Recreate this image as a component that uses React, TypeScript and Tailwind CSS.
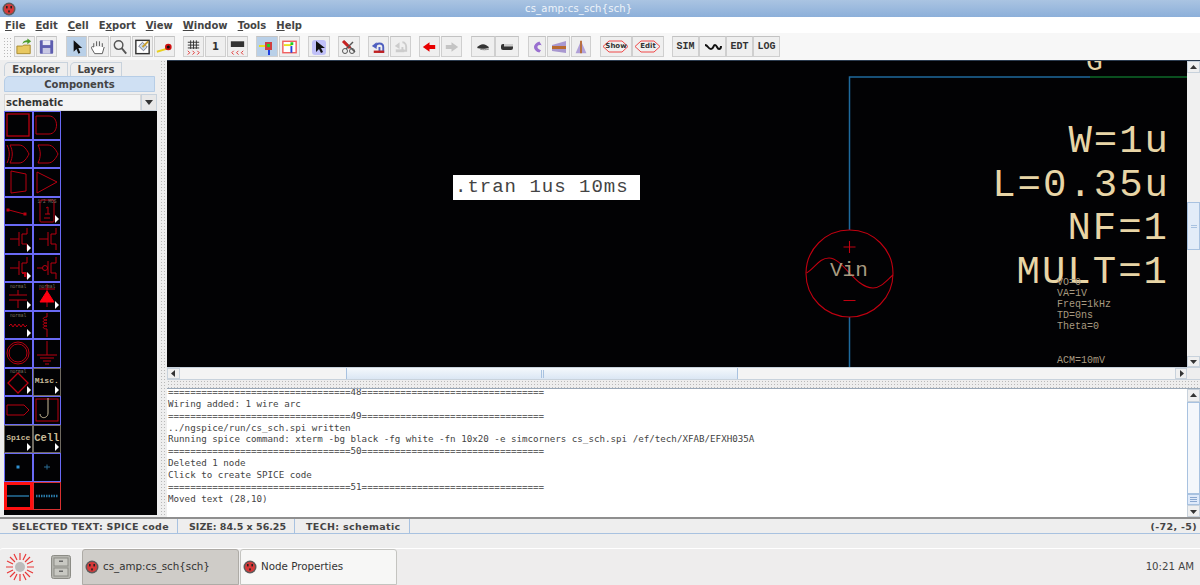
import React from "react";

const Tri = () => (
  <span className="absolute right-0 bottom-0 w-0 h-0 border-y-[4px] border-y-transparent border-l-[4px] border-l-white mr-[1px] mb-[1px]" />
);

const R = "#b80010";
const S = ({ children }: { children: React.ReactNode }) => (
  <svg width="28" height="28" viewBox="0 0 28 28" fill="none" stroke={R} strokeWidth="1" className="block">{children}</svg>
);
const Tiny = ({ t, x = 14, y = 7 }: { t: string; x?: number; y?: number }) => (
  <text x={x} y={y} textAnchor="middle" fontSize="4.5" fill="#7a7062" stroke="none" fontFamily="'Liberation Mono', monospace">{t}</text>
);

type Cell = { i?: React.ReactNode; tri?: boolean; border?: string };
const nm = (extra?: React.ReactNode) => (
  <S><path d="M6 14h9M15 7v14M18 9v10M18 9h5V3M18 19h5v6" />{extra}</S>
);
const BLUE = "border-[#6a6af5]";
const GRAY = "border-[#6f6a60]";
const lab = "font-['Liberation_Mono',monospace] font-bold leading-[26px] text-[#c9bb98] block text-center whitespace-nowrap";
const cells: Cell[] = [
  { i: <S><rect x="3" y="3" width="22" height="22" strokeWidth="1.3" /></S> },
  { i: <S><path d="M3 5h13c10 0 10 18 0 18H3z" /></S> },
  { i: <S><path d="M6 5h9c5 0 8 5 10 9-2 4-5 9-10 9H6c3-6 3-12 0-18zM3 5c3 6 3 12 0 18" /></S> },
  { i: <S><path d="M5 5h10c5 0 8 5 10 9-2 4-5 9-10 9H5c3-6 3-12 0-18z" /></S> },
  { i: <S><path d="M7 3l15 3v17l-15 2z" /></S> },
  { i: <S><path d="M4 4l20 10L4 25z" /></S> },
  { i: <S><path d="M5 13l15 4" /><rect x="3" y="12" width="2" height="2" fill={R} /><rect x="20" y="16" width="2" height="2" fill={R} /></S> },
  { i: <S><rect x="7" y="3" width="14" height="22" rx="1" /><path d="M13 11l2-1v7M12 17h5M11 21h6" /><Tiny t="1/2 MOS" y="6" /></S>, tri: true },
  { i: nm(), tri: true },
  { i: nm() },
  { i: nm(<path d="M18 19h3v4" strokeWidth="2" />), tri: true },
  { i: <S><path d="M4 14h5M15 7v14M18 9v10M18 9h5V3M18 19h5v6" /><circle cx="12" cy="14" r="2.5" /></S> },
  { i: <S><path d="M14 8v5M5 13h18M5 18h18M14 18v8" /><Tiny t="normal" y="6" /></S>, tri: true },
  { i: <S><path d="M14 2v7M14 17v8M6 7h16" /><path d="M14 9l7 11H7z" fill="#ff0010" stroke="#ff0010" /><Tiny t="normal" y="6" /></S>, tri: true },
  { i: <S><path d="M5 15l2-2 2 3 2-3 2 3 2-3 2 3 2-3 2 3 2-2" /><Tiny t="normal" y="6" /></S>, tri: true },
  { i: <S><path d="M14 2v4c-5 0-5 3 0 3-5 0-5 3 0 3-5 0-5 3 0 3-5 0-5 3 0 3v8" /></S> },
  { i: <S><circle cx="14" cy="14" r="11" /><circle cx="14" cy="14" r="9" /></S> },
  { i: <S><path d="M14 2v14M4 16h20M7 19h14M10 22h8M12 25h4" /></S> },
  { i: <S><path d="M14 5l10 10-10 10L4 15z" strokeWidth="1.3" /><Tiny t="normal" y="5" /></S>, tri: true },
  { i: <span className={`${lab} text-[8px]`}>Misc.</span>, tri: true, border: GRAY },
  { i: <S><path d="M3 9h17l5 5-5 5H3z" /></S> },
  { i: <S><rect x="3" y="3" width="22" height="22" /><path d="M15 2v15c0 6-8 6-8 1" stroke="#c9bb98" /></S> },
  { i: <span className={`${lab} text-[8px]`}>Spice</span>, tri: true, border: GRAY },
  { i: <span className={`${lab} text-[10.5px]`}>Cell</span>, tri: true, border: GRAY },
  { i: <S><rect x="12.5" y="12.5" width="3" height="3" fill="#2f8fd0" stroke="none" /></S> },
  { i: <S><path d="M11 14h6M14 11.5v5" stroke="#2a6d94" /></S> },
  { i: <S><path d="M3 14h22" stroke="#2a7aa8" strokeWidth="1.4" /></S>, border: "border-[#ff1010] border-[3px]" },
  { i: <S><path d="M3 14h22" stroke="#2a7aa8" strokeWidth="2.5" strokeDasharray="1.5 1" /></S>, border: "border-[#d83030]" },
];

const Btn = ({ w, on, children }: { w: string; on?: boolean; children?: React.ReactNode }) => (
  <div className={`${w} h-[21px] flex items-center justify-center border border-[#cfcfcf] border-t-[#c2c2c2] ${on ? "bg-[#b9d0e8]" : "bg-[#efefef]"}`}>{children}</div>
);
const Ic = ({ children }: { children: React.ReactNode }) => (
  <svg width="20" height="18" viewBox="0 0 20 18" fill="none" className="block">{children}</svg>
);
const Hex = ({ t }: { t: string }) => (
  <Btn w="w-[32px]">
    <span className="relative flex items-center justify-center w-[24px] h-[13px]">
      <svg width="27" height="13" viewBox="0 0 27 13" fill="none" className="absolute left-[-2px] top-0"><path d="M1 6.5L7 1h13l6 5.5L20 12H7z" stroke="#f04848" /></svg>
      <span className="relative font-['DejaVu_Sans',sans-serif] font-bold text-[7px] text-[#333]">{t}</span>
    </span>
  </Btn>
);
const Sim = ({ t }: { t: string }) => (
  <Btn w="w-[27px]"><span className="font-['Liberation_Mono',monospace] font-bold text-[10px] text-[#333]">{t}</span></Btn>
);

const mono = "font-['DejaVu_Sans_Mono',monospace]";
const eq33 = "=================================";
const logLines = [
  `${eq33}48${eq33}`,
  "Wiring added: 1 wire arc",
  `${eq33}49${eq33}`,
  "../ngspice/run/cs_sch.spi written",
  "Running spice command: xterm -bg black -fg white -fn 10x20 -e simcorners cs_sch.spi /ef/tech/XFAB/EFXH035A",
  `${eq33}50${eq33}`,
  "Deleted 1 node",
  "Click to create SPICE code",
  `${eq33}51${eq33}`,
  "Moved text (28,10)",
];

const Socket = () => (
  <svg width="14" height="14" viewBox="0 0 14 14" className="block shrink-0">
    <circle cx="7" cy="7" r="6.5" fill="#5e5a5a" />
    <circle cx="7" cy="7" r="5" fill="#d83838" />
    <rect x="4" y="4" width="1.6" height="2.4" fill="#222" />
    <rect x="8.4" y="4" width="1.6" height="2.4" fill="#222" />
    <rect x="6.2" y="8.4" width="1.6" height="2" fill="#222" />
  </svg>
);
const grip = "bg-[radial-gradient(#b9b9b9_0.7px,transparent_0.8px)] bg-[length:3px_3px]";
const ArrowBtn = ({ d, cls }: { d: string; cls: string }) => (
  <div className={`${cls} flex items-center justify-center bg-[#efefef] border border-[#c8d2dc]`}>
    <svg width="7" height="7" viewBox="0 0 7 7"><path d={d} fill="#333" /></svg>
  </div>
);

export default function App() {
  return (
    <div className="w-[1200px] h-[585px] flex flex-col overflow-hidden bg-[#eeeeee] font-['DejaVu_Sans',sans-serif]">
      {/* title */}
      <div className="h-[17px] shrink-0 flex items-center bg-gradient-to-b from-[#aac4e2] to-[#8cafd9]">
        <div className="ml-[2px]"><Socket /></div>
        <span className="ml-[509px] text-[10px] tracking-[0.2px] text-[#eef3f9]">cs_amp:cs_sch{"{sch}"}</span>
      </div>
      {/* menu */}
      <div className="h-[16px] shrink-0 bg-white flex items-center pl-[5px] gap-[10px] text-[10px] font-bold text-[#444]">
        <span><u>F</u>ile</span>
        <span><u>E</u>dit</span>
        <span><u>C</u>ell</span>
        <span>E<u>x</u>port</span>
        <span><u>V</u>iew</span>
        <span><u>W</u>indow</span>
        <span><u>T</u>ools</span>
        <span><u>H</u>elp</span>
      </div>
      {/* toolbar */}
      <div className="h-[27px] shrink-0 bg-[#f7f7f7] flex items-center pl-[3px]">
        <div className={`w-[8px] h-[20px] mr-[3px] ${grip}`} />
        <div className="flex gap-[1px] mr-[9px]">
          <Btn w="w-[21px]"><Ic><path d="M2 8h6l1-1h7v9H2z" fill="#e8c860" stroke="#a88a30" /><path d="M8 6c0-3 3-4 5-4V0l4 3-4 3V4c-2 0-4 0-5 2z" fill="#4c9a2a" /></Ic></Btn>
          <Btn w="w-[21px]"><Ic><rect x="3" y="2" width="14" height="14" rx="1" fill="#5e5eb0" /><rect x="6" y="2" width="8" height="5" fill="#e8e8f4" /><rect x="6" y="10" width="8" height="6" fill="#c8c8e4" /></Ic></Btn>
        </div>
        <div className="flex gap-[1px] mr-[8px]">
          <Btn w="w-[21px]" on><Ic><path d="M7 2v12l3-3 2 5 2-1-2-5h4z" fill="#111" /></Ic></Btn>
          <Btn w="w-[21px]"><Ic><path d="M5 9V5M8 8V3M11 8V3M14 9V5M5 9c-2-1-3 0-2 2l3 5h8l2-7" stroke="#555" fill="#fff" /></Ic></Btn>
          <Btn w="w-[21px]"><Ic><circle cx="8" cy="7" r="4.5" stroke="#555" strokeWidth="1.5" /><path d="M11 10l5 6" stroke="#555" strokeWidth="2" /></Ic></Btn>
          <Btn w="w-[21px]"><Ic><rect x="3" y="2" width="14" height="14" fill="#fff" stroke="#333" strokeWidth="1.5" /><path d="M6 8l4-4 5 5-4 4z" fill="#c8d8ea" stroke="#778" /><path d="M10 9l6-6" stroke="#c9a030" strokeWidth="2" /></Ic></Btn>
          <Btn w="w-[21px]"><Ic><path d="M2 14l10-3" stroke="#e8d020" strokeWidth="2" /><circle cx="14" cy="9" r="3.5" fill="#d01010" /><circle cx="14" cy="9" r="1.6" fill="#111" /></Ic></Btn>
        </div>
        <div className="flex gap-[1px] mr-[8px]">
          <Btn w="w-[21px]"><Ic><path d="M7 2v9M10 2v9M13 2v9M4 4h12M4 7h12M4 10h12" stroke="#333" /><path d="M4 13l2 2-2 2M9 13l2 2-2 2M14 13l2 2-2 2" stroke="#e03030" /></Ic></Btn>
          <Btn w="w-[21px]"><span className="font-bold text-[10px] text-[#333]">1</span></Btn>
          <Btn w="w-[21px]"><Ic><rect x="3" y="3" width="14" height="6" fill="#333" /><path d="M6 13l-2 2 2 2M11 13l-2 2 2 2M16 13l-2 2 2 2" stroke="#e03030" /></Ic></Btn>
        </div>
        <div className="flex gap-[1px] mr-[8px]">
          <Btn w="w-[22px]" on><Ic><path d="M2 8h9" stroke="#e8e020" strokeWidth="2" /><path d="M12 12v5" stroke="#2040e0" strokeWidth="2" /><rect x="8" y="4" width="7" height="8" fill="#d04040" /><rect x="10" y="6" width="3" height="3" fill="#20d020" /></Ic></Btn>
          <Btn w="w-[21px]"><Ic><rect x="3" y="3" width="14" height="12" stroke="#f06060" strokeWidth="1.5" fill="#fff" /><path d="M4 7h8" stroke="#e8e020" strokeWidth="2" /><path d="M12 8v7" stroke="#2040e0" strokeWidth="2" /><rect x="11" y="4" width="3" height="3" fill="#20d020" /></Ic></Btn>
        </div>
        <div className="flex mr-[8px]">
          <Btn w="w-[22px]"><Ic><rect x="3" y="2" width="14" height="15" rx="3" fill="#c0c0f8" /><path d="M7 3v11l3-3 2 4 2-1-2-4h4z" fill="#111" /></Ic></Btn>
        </div>
        <div className="flex mr-[8px]">
          <Btn w="w-[22px]"><Ic><path d="M5 3l11 11" stroke="#555" strokeWidth="1.5" /><circle cx="13" cy="13" r="2.5" stroke="#555" /><circle cx="6" cy="13" r="2.5" stroke="#555" /><path d="M4 3l7 7" stroke="#c82020" strokeWidth="3" /><path d="M14 4l-7 7" stroke="#555" strokeWidth="1.5" /></Ic></Btn>
        </div>
        <div className="flex gap-[1px] mr-[8px]">
          <Btn w="w-[21px]"><Ic><path d="M7 9c0-5 8-5 8 0v5H11V9" stroke="#5060c0" strokeWidth="2" /><path d="M5 14h11" stroke="#c02020" strokeWidth="2.5" /><path d="M3 8l5-4v7z" fill="#5060c0" /></Ic></Btn>
          <Btn w="w-[21px]"><Ic><path d="M12 4c3 0 4 3 4 5v4h-4V9" stroke="#cccccc" strokeWidth="2" /><path d="M5 13h9" stroke="#cccccc" strokeWidth="3" /><path d="M4 8l5-4v7z" fill="#cccccc" /></Ic></Btn>
        </div>
        <div className="flex gap-[1px] mr-[9px]">
          <Btn w="w-[21px]"><Ic><path d="M3 9l7-5v3h6v4h-6v3z" fill="#e80000" /></Ic></Btn>
          <Btn w="w-[21px]"><Ic><path d="M17 9l-7-5v3H4v4h6v3z" fill="#c4c4c4" /></Ic></Btn>
        </div>
        <div className="flex mr-[9px]">
          <Btn w="w-[24px]"><Ic><path d="M4 10c3-5 9-5 12 0-3 1-9 1-12 0z" fill="#333" /><path d="M7 11c3 1 6 1 9 0" stroke="#888" /></Ic></Btn>
          <Btn w="w-[24px]"><Ic><rect x="4" y="6" width="12" height="6" rx="2" fill="#333" /><rect x="7" y="6" width="9" height="2.5" fill="#ccc" /></Ic></Btn>
        </div>
        <div className="flex gap-[1px] mr-[9px]">
          <Btn w="w-[18px]"><Ic><path d="M13 2l3 5c-6-2-8 4-1 6l-2 3C4 13 4 5 13 2z" fill="#9a70d0" /></Ic></Btn>
          <Btn w="w-[23px]"><Ic><path d="M3 7l14-4v12l-14-2z" fill="#a898d0" /><path d="M3 8h14v3H3z" fill="#b86a30" /></Ic></Btn>
          <Btn w="w-[20px]"><Ic><path d="M10 2l-6 14h12z" fill="#b0a0d8" /><path d="M9 2h2v14H9z" fill="#b86a30" /></Ic></Btn>
        </div>
        <div className="flex mr-[8px]">
          <Hex t="Show" />
          <Hex t="Edit" />
        </div>
        <div className="flex">
          <Sim t="SIM" />
          <Btn w="w-[27px]"><svg width="18" height="8" viewBox="0 0 18 8"><path d="M1 2c3 0 3 4 6 4s2-4 4-4 2 4 4 4 2-3 2-3" fill="none" stroke="#111" strokeWidth="2" /></svg></Btn>
          <Sim t="EDT" />
          <Sim t="LOG" />
        </div>
      </div>
      {/* main */}
      <div className="h-[457px] shrink-0 flex">
        {/* left */}
        <div className="w-[160px] shrink-0 flex flex-col pl-[4px] pt-[2px]">
          <div className="flex h-[14px] text-[10px] font-bold text-[#444] gap-[2px]">
            <div className="w-[64px] border border-b-0 border-[#c8d2dc] rounded-tl-[5px] text-center leading-[14px]">Explorer</div>
            <div className="w-[52px] border border-b-0 border-[#c8d2dc] rounded-tl-[5px] text-center leading-[14px]">Layers</div>
          </div>
          <div className="w-[151px] h-[16px] bg-[#cfe0f3] border border-[#b6cde6] rounded-tl-[5px] text-[10px] font-bold text-[#444] text-center leading-[15px]">Components</div>
          <div className="mt-[2px] w-[153px] h-[17px] flex">
            <div className="flex-1 bg-[#f4f4f4] border border-[#d8d8d8] text-[10px] font-bold text-[#333] leading-[15px] pl-[1px]">schematic</div>
            <div className="w-[16px] bg-[#e8e8e8] border border-[#c8d2dc] flex items-center justify-center">
              <svg width="8" height="5" viewBox="0 0 8 5"><path d="M0 0h8L4 5z" fill="#333" /></svg>
            </div>
          </div>
          <div className="w-[153px] h-[404px] bg-[#020204] grid grid-cols-[28.5px_28.5px] grid-rows-[repeat(14,28.5px)] content-start">
            {cells.map((c, i) => (
              <div key={i} className={`relative overflow-hidden border ${c.border ?? BLUE} flex items-center justify-center`}>
                <div className="w-[28px] h-[28px] shrink-0">{c.i}</div>
                {c.tri && <Tri />}
              </div>
            ))}
          </div>
        </div>
        {/* divider */}
        <div className={`w-[7px] shrink-0 ${grip}`} />
        {/* right */}
        <div className="flex-1 min-w-0 flex flex-col">
          <div className="h-[307px] flex border-t border-[#2c3c50]">
            <div className="w-[1020px] relative overflow-hidden bg-[#020204]">
              <svg width="1020" height="307" viewBox="0 0 1020 307" fill="none" className="absolute left-0 top-0">
                <path d="M682.5 230V307M682.5 170V16H923" stroke="#1f6a9c" strokeWidth="1.5" />
                <path d="M923 16H1020" stroke="#0e6a28" strokeWidth="1.5" />
                <circle cx="682.5" cy="212.5" r="43.5" stroke="#c00010" strokeWidth="1.1" fill="#020204" />
                <path d="M676.5 186h12M682.5 180v12M676.5 239.5h12" stroke="#c00010" strokeWidth="1.1" />
                <path d="M639.5 212C648 207 652 197 662 197C676 197 688 227 706 227C714 227 720 219 726 214" stroke="#c00010" strokeWidth="1.1" />
              </svg>
              <div className="absolute left-[286px] top-[114px] w-[187px] h-[25px] bg-white font-['Liberation_Mono',monospace] text-[19px] tracking-[1px] leading-[24px] text-[#444] pl-[2px] whitespace-nowrap">.tran 1us 10ms</div>
              <div className="absolute left-[663px] top-[198px] font-['Liberation_Mono',monospace] text-[21px] leading-[24px] text-[#a89a80]">Vin</div>
              <div className="absolute left-[919px] top-[-12px] font-['Liberation_Mono',monospace] text-[28px] leading-[28px] text-[#e6d3a3]">G</div>
              <div className="absolute right-[17px] top-[60px] font-['Liberation_Mono',monospace] text-[39px] tracking-[2px] leading-[43.7px] text-[#e8d5a6] text-right whitespace-nowrap">
                <div>W=1u</div>
                <div>L=0.35u</div>
                <div className="pr-[1px]">NF=1</div>
                <div className="pr-[1px]">MULT=1</div>
              </div>
              <div className="absolute left-[890px] top-[216px] font-['Liberation_Mono',monospace] text-[10px] leading-[11.1px] text-[#a89a80] whitespace-pre">
                {"VO=0\nVA=1V\nFreq=1kHz\nTD=0ns\nTheta=0\n\n\nACM=10mV"}
              </div>
            </div>
            <div className="flex-1 flex flex-col bg-[#f0f0f0]">
              <ArrowBtn d="M0 5h7L3.5 1z" cls="h-[12px]" />
              <div className="h-[129px]" />
              <div className="h-[48px] bg-[#e2ecf8] border border-[#a8c2e0] flex items-center justify-center"><div className="w-[6px] h-[3px] border-y border-[#a8c2e0]" /></div>
              <div className="flex-1" />
              <ArrowBtn d="M0 2h7L3.5 6z" cls="h-[11px]" />
            </div>
          </div>
          <div className="h-[13px] flex bg-[#eeeeee] border-y border-[#c8d2dc]">
            <ArrowBtn d="M5 0v7L1 3.5z" cls="w-[13px]" />
            <div className="w-[166px] bg-[#f4f4f4]" />
            <div className="w-[392px] bg-gradient-to-b from-[#f4f8fc] to-[#dbe7f4] border-x border-[#a8c2e0] flex items-center justify-center"><div className="w-[3px] h-[8px] border-x border-[#a8c2e0]" /></div>
            <div className="w-[437px] bg-[#f4f4f4]" />
            <ArrowBtn d="M2 0v7L6 3.5z" cls="w-[12px]" />
          </div>
          <div className={`h-[8px] ${grip}`} />
          <div className="flex-1 min-h-0 flex border-t border-[#99a8b8] bg-white">
            <div className="flex-1 min-w-0 overflow-hidden pl-[1px]">
              <div className={`-mt-[3px] ${mono} text-[9.2px] leading-[11.85px] text-[#444] whitespace-pre`}>
                {logLines.map((l, i) => (
                  <div key={i}>{l}</div>
                ))}
              </div>
            </div>
            <div className="w-[13px] shrink-0 flex flex-col bg-[#f0f0f0]">
              <ArrowBtn d="M0 5h7L3.5 1z" cls="h-[13px]" />
              <div className="flex-1 bg-[#f4f7fb] border border-[#a8c2e0]" />
              <div className="h-[11px] bg-[#dfeafa] border border-[#a8c2e0] flex flex-col justify-center gap-[1px] px-[2px]">
                <div className="h-px bg-[#8aa8d0]" /><div className="h-px bg-[#8aa8d0]" /><div className="h-px bg-[#8aa8d0]" />
              </div>
              <ArrowBtn d="M0 2h7L3.5 6z" cls="h-[12px]" />
            </div>
          </div>
        </div>
      </div>
      {/* status */}
      <div className="h-[17px] shrink-0 flex items-center border-t-2 border-b border-t-[#8f8f8f] border-b-[#a8c2e0] text-[9.5px] font-bold text-[#444] pl-[3px]">
        <div className="w-[175px] h-full pl-[9px] border-r border-[#a8c2e0] leading-[15px] tracking-[0.28px] whitespace-nowrap">SELECTED TEXT: SPICE code</div>
        <div className="w-[117px] h-full pl-[11px] border-r border-[#a8c2e0] leading-[15px] whitespace-nowrap">SIZE: 84.5 x 56.25</div>
        <div className="w-[115px] h-full pl-[11px] border-r border-[#a8c2e0] leading-[15px] tracking-[0.35px] whitespace-nowrap">TECH: schematic</div>
        <div className="flex-1 text-right pr-[3px] leading-[15px] tracking-[0.35px]">(-72, -5)</div>
      </div>
      <div className="h-[14px] shrink-0 bg-[#eeeeee]" />
      {/* taskbar */}
      <div className="flex-1 min-h-0 flex items-end bg-[#eeeded] border-t border-white rounded-tl-[3px]">
        <div className="w-[39px] h-[36px] flex items-center justify-center shrink-0">
          <svg width="30" height="30" viewBox="0 0 30 30" fill="none">
            <g stroke="#e83a3a" strokeWidth="1.2">
              <path d="M15 1v7M15 22v7M1 15h7M22 15h7M5 5l5 5M20 20l5 5M25 5l-5 5M10 20l-5 5M9 2l3 6M18 22l3 6M21 2l-3 6M12 22l-3 6M2 9l6 3M22 18l6 3M28 9l-6 3M8 18l-6 3" />
            </g>
            <circle cx="15" cy="15" r="5" fill="#bbb" />
          </svg>
        </div>
        <div className="w-[43px] h-[36px] flex items-center justify-center shrink-0">
          <svg width="20" height="24" viewBox="0 0 20 24">
            <rect x="0.5" y="0.5" width="19" height="23" rx="2" fill="#b6b6b0" stroke="#8c8c86" />
            <rect x="3" y="3" width="14" height="8" fill="#c8c8c2" stroke="#8c8c86" />
            <rect x="3" y="13" width="14" height="8" fill="#c8c8c2" stroke="#8c8c86" />
            <rect x="8" y="5.5" width="4" height="1.5" fill="#666" />
            <rect x="8" y="15.5" width="4" height="1.5" fill="#666" />
          </svg>
        </div>
        <div className="h-[36px] w-[157px] shrink-0 flex items-center gap-[4px] pl-[2px] bg-[#cfccc8] border border-[#aeaba6] rounded-t-[3px] text-[10.3px] text-[#333] whitespace-nowrap">
          <Socket />cs_amp:cs_sch{"{sch}"}
        </div>
        <div className="h-[36px] w-[157px] ml-px shrink-0 flex items-center gap-[4px] pl-[2px] bg-[#f7f7f6] border border-[#c4c4c0] rounded-t-[3px] text-[10.3px] text-[#333] whitespace-nowrap">
          <Socket />Node Properties
        </div>
        <div className="flex-1 h-[36px] flex items-center justify-end pr-[6px] text-[10.2px] text-[#444]">10:21 AM</div>
      </div>
    </div>
  );
}
